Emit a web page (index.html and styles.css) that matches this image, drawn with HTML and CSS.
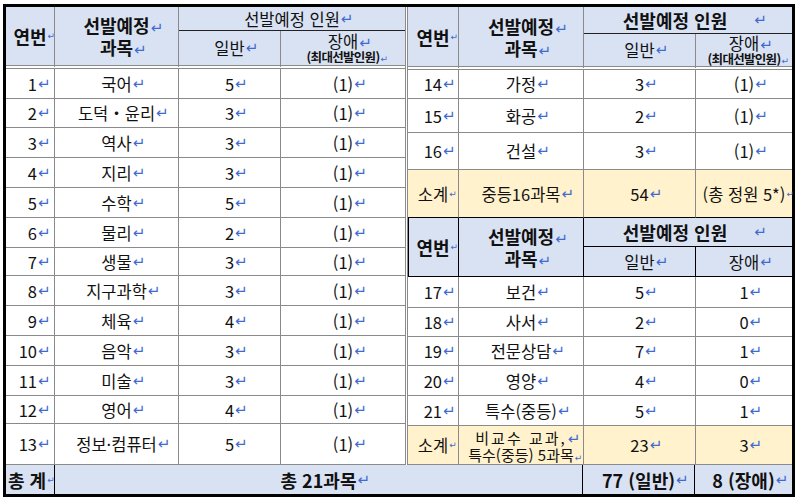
FILE: index.html
```html
<!DOCTYPE html>
<html lang="ko">
<head>
<meta charset="utf-8">
<title>선발예정 인원</title>
<link rel="stylesheet" href="styles.css">
</head>
<body>
<div class="sheet">
  <div class="top">
    <div class="grid gl">
      <div class="c h b big sr">연번<span class="pm s">↵</span></div>
      <div class="c h b big sr col"><div>선발예정<span class="pm">↵</span></div><div>과목<span class="pm">↵</span></div></div>
      <div class="c h sc e sub dk">선발예정 인원<span class="pm">↵</span></div>
      <div class="c h dbl">일반<span class="pm">↵</span></div>
      <div class="c h dbl e col"><div class="ja">장애<span class="pm">↵</span></div><div class="tiny">(최대선발인원)<span class="pm s">↵</span></div></div>

      <div class="c n">1<span class="pm">↵</span></div><div class="c">국어<span class="pm">↵</span></div><div class="c">5<span class="pm">↵</span></div><div class="c e">(1)<span class="pm">↵</span></div>
      <div class="c n">2<span class="pm">↵</span></div><div class="c">도덕・윤리<span class="pm">↵</span></div><div class="c">3<span class="pm">↵</span></div><div class="c e">(1)<span class="pm">↵</span></div>
      <div class="c n">3<span class="pm">↵</span></div><div class="c">역사<span class="pm">↵</span></div><div class="c">3<span class="pm">↵</span></div><div class="c e">(1)<span class="pm">↵</span></div>
      <div class="c n">4<span class="pm">↵</span></div><div class="c">지리<span class="pm">↵</span></div><div class="c">3<span class="pm">↵</span></div><div class="c e">(1)<span class="pm">↵</span></div>
      <div class="c n">5<span class="pm">↵</span></div><div class="c">수학<span class="pm">↵</span></div><div class="c">5<span class="pm">↵</span></div><div class="c e">(1)<span class="pm">↵</span></div>
      <div class="c n">6<span class="pm">↵</span></div><div class="c">물리<span class="pm">↵</span></div><div class="c">2<span class="pm">↵</span></div><div class="c e">(1)<span class="pm">↵</span></div>
      <div class="c n">7<span class="pm">↵</span></div><div class="c">생물<span class="pm">↵</span></div><div class="c">3<span class="pm">↵</span></div><div class="c e">(1)<span class="pm">↵</span></div>
      <div class="c n">8<span class="pm">↵</span></div><div class="c">지구과학<span class="pm">↵</span></div><div class="c">3<span class="pm">↵</span></div><div class="c e">(1)<span class="pm">↵</span></div>
      <div class="c n">9<span class="pm">↵</span></div><div class="c">체육<span class="pm">↵</span></div><div class="c">4<span class="pm">↵</span></div><div class="c e">(1)<span class="pm">↵</span></div>
      <div class="c n">10<span class="pm">↵</span></div><div class="c">음악<span class="pm">↵</span></div><div class="c">3<span class="pm">↵</span></div><div class="c e">(1)<span class="pm">↵</span></div>
      <div class="c n">11<span class="pm">↵</span></div><div class="c">미술<span class="pm">↵</span></div><div class="c">3<span class="pm">↵</span></div><div class="c e">(1)<span class="pm">↵</span></div>
      <div class="c n">12<span class="pm">↵</span></div><div class="c">영어<span class="pm">↵</span></div><div class="c">4<span class="pm">↵</span></div><div class="c e">(1)<span class="pm">↵</span></div>
      <div class="c n">13<span class="pm">↵</span></div><div class="c">정보·컴퓨터<span class="pm">↵</span></div><div class="c">5<span class="pm">↵</span></div><div class="c e">(1)<span class="pm">↵</span></div>
    </div>

    <div class="grid gr">
      <div class="c h b big sr">연번<span class="pm s">↵</span></div>
      <div class="c h b big sr col"><div>선발예정<span class="pm">↵</span></div><div>과목<span class="pm">↵</span></div></div>
      <div class="c h b big sc e sub dk">선발예정 인원<span class="gap"></span><span class="pm">↵</span></div>
      <div class="c h dbl">일반<span class="pm">↵</span></div>
      <div class="c h dbl e col"><div class="ja">장애<span class="pm">↵</span></div><div class="tiny">(최대선발인원)<span class="pm s">↵</span></div></div>

      <div class="c n">14<span class="pm">↵</span></div><div class="c">가정<span class="pm">↵</span></div><div class="c">3<span class="pm">↵</span></div><div class="c e">(1)<span class="pm">↵</span></div>
      <div class="c n">15<span class="pm">↵</span></div><div class="c">화공<span class="pm">↵</span></div><div class="c">2<span class="pm">↵</span></div><div class="c e">(1)<span class="pm">↵</span></div>
      <div class="c n">16<span class="pm">↵</span></div><div class="c">건설<span class="pm">↵</span></div><div class="c">3<span class="pm">↵</span></div><div class="c e">(1)<span class="pm">↵</span></div>
      <div class="c y kb">소계<span class="pm s">↵</span></div><div class="c y kb">중등16과목<span class="pm">↵</span></div><div class="c y kb">54<span class="pm">↵</span></div><div class="c y kb e">(총 정원 5*)<span class="pm s">↵</span></div>

      <div class="c h b big sr kb kr kl">연번<span class="pm s">↵</span></div>
      <div class="c h b big sr kb kr col"><div>선발예정<span class="pm">↵</span></div><div>과목<span class="pm">↵</span></div></div>
      <div class="c h b big sc e kb">선발예정 인원<span class="gap"></span><span class="pm">↵</span></div>
      <div class="c h kb kr">일반<span class="pm">↵</span></div>
      <div class="c h kb e">장애<span class="pm">↵</span></div>

      <div class="c n">17<span class="pm">↵</span></div><div class="c">보건<span class="pm">↵</span></div><div class="c">5<span class="pm">↵</span></div><div class="c e">1<span class="pm">↵</span></div>
      <div class="c n">18<span class="pm">↵</span></div><div class="c">사서<span class="pm">↵</span></div><div class="c">2<span class="pm">↵</span></div><div class="c e">0<span class="pm">↵</span></div>
      <div class="c n">19<span class="pm">↵</span></div><div class="c">전문상담<span class="pm">↵</span></div><div class="c">7<span class="pm">↵</span></div><div class="c e">1<span class="pm">↵</span></div>
      <div class="c n">20<span class="pm">↵</span></div><div class="c">영양<span class="pm">↵</span></div><div class="c">4<span class="pm">↵</span></div><div class="c e">0<span class="pm">↵</span></div>
      <div class="c n">21<span class="pm">↵</span></div><div class="c">특수(중등)<span class="pm">↵</span></div><div class="c">5<span class="pm">↵</span></div><div class="c e">1<span class="pm">↵</span></div>
      <div class="c y">소계<span class="pm s">↵</span></div>
      <div class="c y col two"><div class="spaced">비교수 교과,<span class="pm">↵</span></div><div>특수(중등) 5과목<span class="pm s">↵</span></div></div>
      <div class="c y">23<span class="pm">↵</span></div>
      <div class="c y e">3<span class="pm">↵</span></div>
    </div>
  </div>

  <div class="foot">
    <div class="f left kr">총 계<span class="pm s">↵</span></div>
    <div class="f kr">총 21과목<span class="pm">↵</span></div>
    <div class="f kr">77 (일반)<span class="pm">↵</span></div>
    <div class="f">8 (장애)<span class="pm">↵</span></div>
  </div>
</div>
</body>
</html>
```

FILE: styles.css
```css
* {
  box-sizing: border-box;
  margin: 0;
  padding: 0;
}

body {
  margin: 0;
  background: #ffffff;
  font-family: "Noto Sans CJK KR", "Noto Sans", sans-serif;
  color: #111111;
}

.sheet {
  margin: 4px 0 0 3px;
  width: 792px;
  border: 3px solid #000000;
  background: #ffffff;
}

.top {
  display: flex;
  gap: 1px;
  align-items: flex-start;
}

.grid {
  display: grid;
}

.gl {
  width: 400px;
  border-right: 1px solid #8a8a8a;
  grid-template-columns: 49px 124px 102px 124px;
  grid-template-rows: 24px 38px 30px 29px 30px 30px 30px 30px 28px 30px 30px 30px 30px 28px 41px;
}

.gr {
  width: 385px;
  border-left: 1px solid #8a8a8a;
  grid-template-columns: 51px 125px 112px 96px;
  grid-template-rows: 27px 36px 29px 34px 37px 48px 29px 30px 31px 29px 29px 30px 30px 39px;
}

.c {
  display: flex;
  align-items: center;
  justify-content: center;
  border-right: 1px solid #8a8a8a;
  border-bottom: 1px solid #8a8a8a;
  font-size: 16.5px;
  line-height: 20px;
  white-space: nowrap;
  text-align: center;
}

.c.e {
  border-right: none;
}

.c.n {
  justify-content: flex-end;
  padding-right: 17px;
}

.gr .c.n {
  padding-right: 16px;
}

.h {
  background: #d9e2f3;
  background-clip: padding-box;
}

.y {
  background: #fff2cc;
  background-clip: padding-box;
}

.b {
  font-weight: 700;
}

.big {
  font-size: 18px;
  line-height: 22px;
}

.sr {
  grid-row: span 2;
}

.sc {
  grid-column: span 2;
}

.sub.dk {
  border-bottom-color: #222222;
}

.dbl,
.gl .sr:not(.kb),
.gr .sr:not(.kb) {
  border-bottom: 4px double #8a8a8a;
}

.col {
  flex-direction: column;
}

.ja {
  line-height: 18px;
}

.tiny {
  font-size: 12.5px;
  line-height: 14px;
  font-weight: 700;
  letter-spacing: -0.7px;
}

.two {
  font-size: 15px;
  line-height: 17px;
  padding-top: 1px;
}

.spaced {
  letter-spacing: 2px;
}

.kb {
  border-bottom-color: #000000;
}

.kr {
  border-right-color: #000000;
}

.kl {
  box-shadow: inset 1px 0 0 #000000;
}

.gap {
  display: inline-block;
  width: 26px;
}

.pm {
  display: inline-block;
  width: 0;
  overflow: visible;
  white-space: nowrap;
  font-family: "DejaVu Sans", sans-serif;
  font-size: 15px;
  line-height: 10px;
  font-weight: 400;
  letter-spacing: 0;
  color: #3f6ad0;
  text-indent: 1px;
}

.pm.s {
  font-size: 9px;
}

.foot {
  display: grid;
  grid-template-columns: 49px 528px 112px 97px;
  height: 29px;
  background: #d9e2f3;
}

.f {
  display: flex;
  align-items: center;
  justify-content: center;
  font-size: 18px;
  font-weight: 700;
  line-height: 20px;
  white-space: nowrap;
}

.f.left {
  justify-content: flex-start;
  padding-left: 2px;
  overflow: hidden;
}

.f.kr {
  border-right: 1px solid #000000;
}
```
